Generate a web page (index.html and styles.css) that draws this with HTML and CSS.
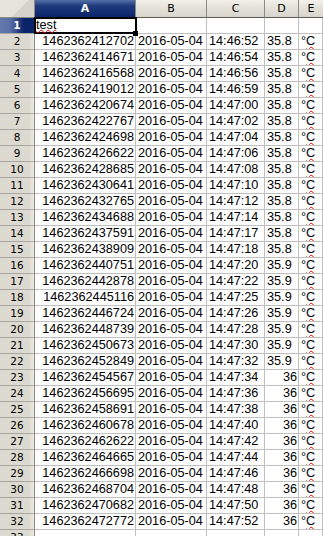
FILE: index.html
```html
<!DOCTYPE html>
<html>
<head>
<meta charset="utf-8">
<link rel="stylesheet" href="styles.css">
</head>
<body>
<div class="sheet">
  <div class="corner"></div>
  <div class="ch sel">A</div><div class="ch">B</div><div class="ch">C</div><div class="ch">D</div><div class="ch last">E</div>

  <div class="rh sel">1</div><div class="c t a1"><i class="cursor"></i><i class="handle"></i><span class="spell top">test</span></div><div class="c"></div><div class="c"></div><div class="c"></div><div class="c"></div>

  <div class="rh">2</div><div class="c n">1462362412702</div><div class="c t">2016-05-04</div><div class="c t">14:46:52</div><div class="c t">35.8</div><div class="c t">°<span class="spell">C</span></div>
  <div class="rh">3</div><div class="c n">1462362414671</div><div class="c t">2016-05-04</div><div class="c t">14:46:54</div><div class="c t">35.8</div><div class="c t">°<span class="spell">C</span></div>
  <div class="rh">4</div><div class="c n">1462362416568</div><div class="c t">2016-05-04</div><div class="c t">14:46:56</div><div class="c t">35.8</div><div class="c t">°<span class="spell">C</span></div>
  <div class="rh">5</div><div class="c n">1462362419012</div><div class="c t">2016-05-04</div><div class="c t">14:46:59</div><div class="c t">35.8</div><div class="c t">°<span class="spell">C</span></div>
  <div class="rh">6</div><div class="c n">1462362420674</div><div class="c t">2016-05-04</div><div class="c t">14:47:00</div><div class="c t">35.8</div><div class="c t">°<span class="spell">C</span></div>
  <div class="rh">7</div><div class="c n">1462362422767</div><div class="c t">2016-05-04</div><div class="c t">14:47:02</div><div class="c t">35.8</div><div class="c t">°<span class="spell">C</span></div>
  <div class="rh">8</div><div class="c n">1462362424698</div><div class="c t">2016-05-04</div><div class="c t">14:47:04</div><div class="c t">35.8</div><div class="c t">°<span class="spell">C</span></div>
  <div class="rh">9</div><div class="c n">1462362426622</div><div class="c t">2016-05-04</div><div class="c t">14:47:06</div><div class="c t">35.8</div><div class="c t">°<span class="spell">C</span></div>
  <div class="rh">10</div><div class="c n">1462362428685</div><div class="c t">2016-05-04</div><div class="c t">14:47:08</div><div class="c t">35.8</div><div class="c t">°<span class="spell">C</span></div>
  <div class="rh">11</div><div class="c n">1462362430641</div><div class="c t">2016-05-04</div><div class="c t">14:47:10</div><div class="c t">35.8</div><div class="c t">°<span class="spell">C</span></div>
  <div class="rh">12</div><div class="c n">1462362432765</div><div class="c t">2016-05-04</div><div class="c t">14:47:12</div><div class="c t">35.8</div><div class="c t">°<span class="spell">C</span></div>
  <div class="rh">13</div><div class="c n">1462362434688</div><div class="c t">2016-05-04</div><div class="c t">14:47:14</div><div class="c t">35.8</div><div class="c t">°<span class="spell">C</span></div>
  <div class="rh">14</div><div class="c n">1462362437591</div><div class="c t">2016-05-04</div><div class="c t">14:47:17</div><div class="c t">35.8</div><div class="c t">°<span class="spell">C</span></div>
  <div class="rh">15</div><div class="c n">1462362438909</div><div class="c t">2016-05-04</div><div class="c t">14:47:18</div><div class="c t">35.8</div><div class="c t">°<span class="spell">C</span></div>
  <div class="rh">16</div><div class="c n">1462362440751</div><div class="c t">2016-05-04</div><div class="c t">14:47:20</div><div class="c t">35.9</div><div class="c t">°<span class="spell">C</span></div>
  <div class="rh">17</div><div class="c n">1462362442878</div><div class="c t">2016-05-04</div><div class="c t">14:47:22</div><div class="c t">35.9</div><div class="c t">°<span class="spell">C</span></div>
  <div class="rh">18</div><div class="c n">1462362445116</div><div class="c t">2016-05-04</div><div class="c t">14:47:25</div><div class="c t">35.9</div><div class="c t">°<span class="spell">C</span></div>
  <div class="rh">19</div><div class="c n">1462362446724</div><div class="c t">2016-05-04</div><div class="c t">14:47:26</div><div class="c t">35.9</div><div class="c t">°<span class="spell">C</span></div>
  <div class="rh">20</div><div class="c n">1462362448739</div><div class="c t">2016-05-04</div><div class="c t">14:47:28</div><div class="c t">35.9</div><div class="c t">°<span class="spell">C</span></div>
  <div class="rh">21</div><div class="c n">1462362450673</div><div class="c t">2016-05-04</div><div class="c t">14:47:30</div><div class="c t">35.9</div><div class="c t">°<span class="spell">C</span></div>
  <div class="rh">22</div><div class="c n">1462362452849</div><div class="c t">2016-05-04</div><div class="c t">14:47:32</div><div class="c t">35.9</div><div class="c t">°<span class="spell">C</span></div>
  <div class="rh">23</div><div class="c n">1462362454567</div><div class="c t">2016-05-04</div><div class="c t">14:47:34</div><div class="c n">36</div><div class="c t">°<span class="spell">C</span></div>
  <div class="rh">24</div><div class="c n">1462362456695</div><div class="c t">2016-05-04</div><div class="c t">14:47:36</div><div class="c n">36</div><div class="c t">°<span class="spell">C</span></div>
  <div class="rh">25</div><div class="c n">1462362458691</div><div class="c t">2016-05-04</div><div class="c t">14:47:38</div><div class="c n">36</div><div class="c t">°<span class="spell">C</span></div>
  <div class="rh">26</div><div class="c n">1462362460678</div><div class="c t">2016-05-04</div><div class="c t">14:47:40</div><div class="c n">36</div><div class="c t">°<span class="spell">C</span></div>
  <div class="rh">27</div><div class="c n">1462362462622</div><div class="c t">2016-05-04</div><div class="c t">14:47:42</div><div class="c n">36</div><div class="c t">°<span class="spell">C</span></div>
  <div class="rh">28</div><div class="c n">1462362464665</div><div class="c t">2016-05-04</div><div class="c t">14:47:44</div><div class="c n">36</div><div class="c t">°<span class="spell">C</span></div>
  <div class="rh">29</div><div class="c n">1462362466698</div><div class="c t">2016-05-04</div><div class="c t">14:47:46</div><div class="c n">36</div><div class="c t">°<span class="spell">C</span></div>
  <div class="rh">30</div><div class="c n">1462362468704</div><div class="c t">2016-05-04</div><div class="c t">14:47:48</div><div class="c n">36</div><div class="c t">°<span class="spell">C</span></div>
  <div class="rh">31</div><div class="c n">1462362470682</div><div class="c t">2016-05-04</div><div class="c t">14:47:50</div><div class="c n">36</div><div class="c t">°<span class="spell">C</span></div>
  <div class="rh">32</div><div class="c n">1462362472772</div><div class="c t">2016-05-04</div><div class="c t">14:47:52</div><div class="c n">36</div><div class="c t">°<span class="spell">C</span></div>
  <div class="rh">33</div><div class="c"></div><div class="c"></div><div class="c"></div><div class="c"></div><div class="c"></div>
</div>
</body>
</html>
```

FILE: styles.css
```css
html, body {
  margin: 0;
  padding: 0;
  background: #ffffff;
  overflow: hidden;
}

.sheet {
  display: grid;
  grid-template-columns: 35px 101px 71px 58px 34px 1fr;
  grid-template-rows: 18px repeat(33, 16px);
  width: 323px;
  height: 536px;
  overflow: hidden;
  font-family: "Liberation Sans", Arial, sans-serif;
  font-size: 12.7px;
  color: #000;
}

.sheet > div {
  box-sizing: border-box;
}

.corner {
  background: linear-gradient(135deg, #e6e4dc 0%, #e6e4dc 55%, #d6d3ca 56%, #d6d3ca 100%);
  border-right: 1px solid #8c8a84;
  border-bottom: 1px solid #8c8a84;
}

.ch {
  background: linear-gradient(#f1f0ea 0%, #e4e2da 45%, #d8d5cc 100%);
  border-right: 1px solid #8c8a84;
  border-bottom: 1px solid #5a5954;
  font-family: "DejaVu Sans", sans-serif;
  font-size: 11px;
  line-height: 17px;
  text-align: center;
  color: #000;
}

.ch.sel {
  background: linear-gradient(#5670a8 0%, #1e3a7c 35%, #0a246a 100%);
  color: #fff;
  font-weight: bold;
  border-bottom-color: #0a246a;
}

.ch.last {
  border-right: none;
}

.rh {
  background: linear-gradient(90deg, #dcd9d0 0%, #dcd9d0 85%, #ebe9e2 100%);
  border-right: 1px solid #8c8a84;
  border-bottom: 1px solid #a9a79f;
  font-family: "DejaVu Sans", sans-serif;
  font-size: 10.5px;
  line-height: 15px;
  text-align: center;
  color: #000;
}

.rh.sel {
  background: linear-gradient(90deg, #6478ad 0%, #5a6fa6 30%, #0a246a 70%, #0a246a 100%);
  color: #fff;
  font-weight: bold;
}

.c {
  border-right: 1px solid #c0c0c0;
  border-bottom: 1px solid #c0c0c0;
  line-height: 15px;
  white-space: nowrap;
  overflow: hidden;
  padding: 0 1px 0 2px;
}

.c.n {
  text-align: right;
}

.c.t {
  text-align: left;
}

.a1 {
  position: relative;
  overflow: visible;
  z-index: 2;
  padding-left: 1px;
  line-height: 14px;
}

.cursor {
  position: absolute;
  left: -1px;
  top: -1px;
  right: -2px;
  bottom: -1px;
  border: 2px solid #000;
  pointer-events: none;
}

.handle {
  position: absolute;
  right: -3px;
  bottom: -3px;
  width: 5px;
  height: 5px;
  background: #000;
}

.spell {
  text-decoration: underline wavy #e00000;
  text-decoration-thickness: 1.4px;
  text-underline-offset: 1px;
}

.spell.top {
  position: relative;
  z-index: 1;
  text-underline-offset: 0;
}
```
